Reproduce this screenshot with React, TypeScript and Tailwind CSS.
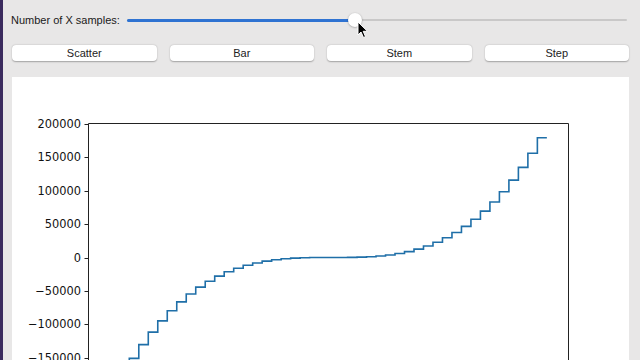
import React from "react";

const ticks = [200000, 150000, 100000, 50000, 0, -50000, -100000, -150000, -200000];

function StepChart() {
  // panel origin at (12,77) in page coordinates
  const ox = 12;
  const oy = 77;
  const zeroY = 257.5 - oy;
  const pxPer = 33.35 / 50000;
  const n = 45;
  const pts: [number, number][] = [];
  for (let i = 0; i < n; i++) {
    const xa = 129.3 + i * 9.49;
    const v = 120 * Math.pow((xa - 337) / 210, 3);
    pts.push([xa - ox, zeroY - v]);
  }
  let d = `M${pts[0][0].toFixed(2)} ${pts[0][1].toFixed(2)}`;
  for (let i = 1; i < n; i++) {
    d += ` V${pts[i][1].toFixed(2)} H${pts[i][0].toFixed(2)}`;
  }
  const left = 88.5 - ox;
  const right = 568.5 - ox;
  const top = 123.5 - oy;
  return (
    <svg width="617" height="300" className="block">
      <path d={d} fill="none" stroke="#1f6fa8" strokeWidth="1.6" strokeLinejoin="miter" />
      <line x1={left} y1={top} x2={right} y2={top} stroke="#222" strokeWidth="1" />
      <line x1={left} y1={top} x2={left} y2={300} stroke="#222" strokeWidth="1" />
      <line x1={right} y1={top} x2={right} y2={300} stroke="#222" strokeWidth="1" />
      {ticks.map((t) => {
        const y = zeroY - t * pxPer;
        const label = t < 0 ? "\u2212" + String(-t) : String(t);
        return (
          <g key={t}>
            <line x1={left - 4} y1={Math.round(y) + 0.5} x2={left} y2={Math.round(y) + 0.5} stroke="#222" strokeWidth="1" />
            <text
              x={81 - ox}
              y={y}
              textAnchor="end"
              dominantBaseline="central"
              fontFamily="'DejaVu Sans', sans-serif"
              fontSize="11.4"
              fill="#111"
            >
              {label}
            </text>
          </g>
        );
      })}
    </svg>
  );
}

export default function App() {
  const btn =
    "h-[16px] rounded-[4px] bg-white shadow-[0_0.5px_1.5px_rgba(0,0,0,0.3)] flex items-center justify-center text-[11px] text-[#222] leading-none";
  return (
    <div
      className="relative w-[640px] h-[360px] overflow-hidden flex bg-[#e8e7e7]"
      style={{ fontFamily: "'Liberation Sans', Arial, sans-serif" }}
    >
      <div className="w-[3px] shrink-0 bg-[#3b2b5e]" />
      <div className="flex-1 flex flex-col pl-[9px] pr-[11px] min-w-0">
        <div className="h-[40px] flex items-center shrink-0">
          <span className="w-[106px] shrink-0 text-[11px] text-[#1a1a1a] ml-[-1px] whitespace-nowrap">Number of X samples:</span>
          <div className="relative flex-1 ml-[10px] mr-[2px] h-[16px] flex items-center">
            <div className="h-[2px] w-full rounded-full bg-[#c9c8c8]" />
            <div className="absolute left-0 top-[6.5px] h-[3px] w-[228px] rounded-full bg-[#2f73d2]" />
            <div className="absolute left-[221px] top-[1px] w-[14px] h-[14px] rounded-full bg-white shadow-[0_0.5px_2px_rgba(0,0,0,0.35)]" />
          </div>
        </div>
        <div className="grid grid-cols-4 gap-x-[13px] mt-[5px] shrink-0">
          <div className={btn}>Scatter</div>
          <div className={btn}>Bar</div>
          <div className={btn}>Stem</div>
          <div className={btn}>Step</div>
        </div>
        <div className="mt-[16px] flex-1 bg-white overflow-hidden">
          <StepChart />
        </div>
      </div>
      <svg className="absolute left-[357px] top-[21px]" width="12" height="18" viewBox="0 0 12 18">
        <path d="M1 1 L1 14 L4 11 L6.5 16.5 L8.5 15.6 L6.2 10.3 L10.5 10.3 Z" fill="#000" stroke="#fff" strokeWidth="1" strokeLinejoin="round" />
      </svg>
    </div>
  );
}
